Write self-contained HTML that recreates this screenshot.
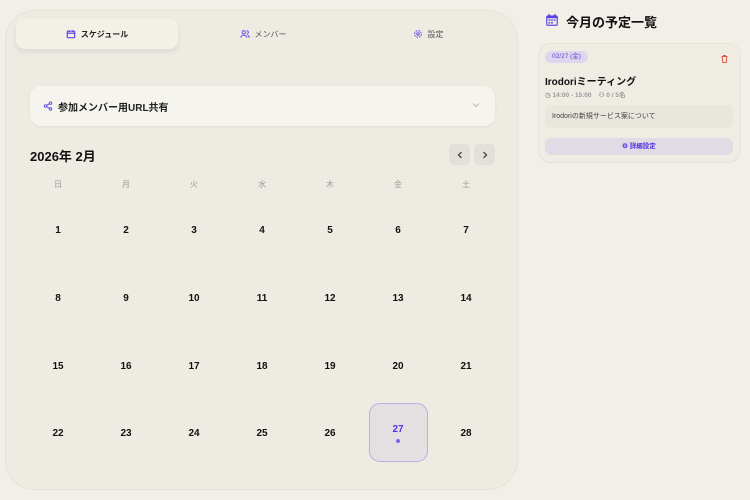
<!DOCTYPE html>
<html><head><meta charset="utf-8"><style>
*{box-sizing:border-box;margin:0;padding:0}
body{width:750px;height:500px;background:#f2efe8;font-family:"Liberation Sans","Noto Sans CJK JP",sans-serif;position:relative;overflow:hidden;color:#111}
.abs{position:absolute}
.panel{left:5px;top:10px;width:513px;height:480px;background:#eeebe3;border-radius:30px;border:1px solid #e6e2d8}
.tab{top:19px;height:30px;display:flex;align-items:center;justify-content:center;font-size:8px;gap:5px;color:#555}
.tab.active{left:16px;width:162px;background:#f3f0e8;border-radius:9px;box-shadow:0 3px 6px rgba(0,0,0,.08);color:#222;font-weight:bold}
.share{left:30px;top:86px;width:465px;height:40px;background:#f6f4ee;border-radius:11px;box-shadow:0 1px 3px rgba(0,0,0,.06);display:flex;align-items:center;padding-left:13px;font-size:10px;font-weight:bold;gap:5px;color:#222}
.nb{top:144px;width:21px;height:21px;background:#e3e0d9;border-radius:5px;display:flex;align-items:center;justify-content:center}
.wd{top:179px;width:40px;text-align:center;font-size:8px;color:#999;margin-left:-20px}
.d{width:40px;margin-left:-20px;text-align:center;font-size:10px;font-weight:bold;color:#111}
.sel{left:369px;top:403px;width:59px;height:59px;background:#e4e0e2;border:1px solid #b9aee6;border-radius:11px}
.card{left:538px;top:43px;width:203px;height:120px;background:#efece4;border-radius:13px;border:1px solid #e6e2d8}
</style></head><body>
<div class="abs panel"></div>
<div class="abs tab active"><svg width="10" height="10" viewBox="0 0 24 24" fill="none" stroke="#4f35e0" stroke-width="2.5"><rect x="3" y="5" width="18" height="16" rx="2"/><path d="M8 3v4M16 3v4M3 10h18"/></svg>スケジュール</div>
<div class="abs tab" style="left:178px;width:170px"><svg width="10" height="10" viewBox="0 0 24 24" fill="none" stroke="#6a55e0" stroke-width="2.5"><circle cx="9" cy="8" r="4"/><path d="M2 21c0-4 3-6 7-6s7 2 7 6M16 4a4 4 0 0 1 0 8M18 15c3 1 4 3 4 6"/></svg>メンバー</div>
<div class="abs tab" style="left:348px;width:160px"><svg width="10" height="10" viewBox="0 0 24 24" fill="none" stroke="#6a55e0" stroke-width="2.5"><circle cx="12" cy="12" r="3"/><circle cx="12" cy="12" r="8" stroke-dasharray="4 2.3"/></svg>設定</div>
<div class="abs share"><svg width="10" height="10" viewBox="0 0 24 24" fill="none" stroke="#6a55e0" stroke-width="2.5"><circle cx="18" cy="5" r="3"/><circle cx="6" cy="12" r="3"/><circle cx="18" cy="19" r="3"/><path d="M8.6 13.5l6.8 4M15.4 6.5l-6.8 4"/></svg>参加メンバー用URL共有</div>
<svg class="abs" style="left:472px;top:102px" width="8" height="6" viewBox="0 0 8 6"><path d="M1 1.5l3 3 3-3" fill="none" stroke="#bbb" stroke-width="1"/></svg>
<div class="abs" style="left:30px;top:146px;font-size:13px;font-weight:bold">2026年 2月</div>
<div class="abs nb" style="left:449px"><svg width="6" height="8" viewBox="0 0 6 8"><path d="M4.5 1L1.5 4l3 3" fill="none" stroke="#333" stroke-width="1.2"/></svg></div>
<div class="abs nb" style="left:474px"><svg width="6" height="8" viewBox="0 0 6 8"><path d="M1.5 1l3 3-3 3" fill="none" stroke="#333" stroke-width="1.2"/></svg></div>
<div class="abs wd" style="left:58px">日</div><div class="abs wd" style="left:126px">月</div><div class="abs wd" style="left:194px">火</div><div class="abs wd" style="left:262px">水</div><div class="abs wd" style="left:330px">木</div><div class="abs wd" style="left:398px">金</div><div class="abs wd" style="left:466px">土</div>
<div class="abs sel"></div>
<div id="g"></div>
<script>
var h='',n=1,ys=[225,293,361,428];
for(var r=0;r<4;r++)for(var c=0;c<7;c++){var col=(n==27)?'color:#4f35e0;':'';var y=ys[r]-(n==27?4:0);
h+='<div class="abs d" style="left:'+(58+c*68)+'px;top:'+y+'px;'+col+'">'+n+'</div>';n++;}
document.getElementById('g').innerHTML=h;
</script>
<div class="abs" style="left:396px;top:439px;width:4px;height:4px;border-radius:50%;background:#7a66e6"></div>

<svg class="abs" style="left:545px;top:13px" width="14" height="14" viewBox="0 0 24 24"><rect x="2" y="4" width="20" height="18" rx="3" fill="#5b45e0"/><rect x="4" y="9" width="16" height="11" fill="#efece4"/><path d="M7 2v4M17 2v4" stroke="#5b45e0" stroke-width="2.5"/><g fill="#5b45e0"><rect x="6" y="11" width="3" height="2.5"/><rect x="10.5" y="11" width="3" height="2.5"/><rect x="15" y="11" width="3" height="2.5"/><rect x="6" y="15.5" width="3" height="2.5"/><rect x="10.5" y="15.5" width="3" height="2.5"/></g></svg>
<div class="abs" style="left:566px;top:12px;font-size:13px;font-weight:bold">今月の予定一覧</div>
<div class="abs card"></div>
<div class="abs" style="left:545px;top:51px;width:43px;height:12px;background:#ddd6ec;border-radius:6px;font-size:6.5px;color:#5b45e0;text-align:center;line-height:12px">02/27 (金)</div>
<svg class="abs" style="left:721px;top:55px" width="7" height="8" viewBox="0 0 14 16" fill="none" stroke="#e05a4a" stroke-width="2"><path d="M1 3h12M5 3V1h4v2M2.5 3l1 12h7l1-12"/></svg>
<div class="abs" style="left:545px;top:73px;font-size:10px;font-weight:bold">Irodoriミーティング</div>
<div class="abs" style="left:545px;top:89px;font-size:6.5px;color:#999;font-weight:bold">◷ 14:00 - 15:00 &nbsp;&nbsp;&nbsp;⚇ 0 / 5名</div>
<div class="abs" style="left:545px;top:105px;width:188px;height:23px;background:#e9e6de;border-radius:6px;font-size:7px;color:#444;line-height:23px;padding-left:7px">Irodoriの新規サービス案について</div>
<div class="abs" style="left:545px;top:138px;width:188px;height:17px;background:#e0dbe4;border-radius:6px;font-size:6.5px;color:#4f35e0;font-weight:bold;line-height:17px;text-align:center">⚙ 詳細設定</div>
</body></html>
